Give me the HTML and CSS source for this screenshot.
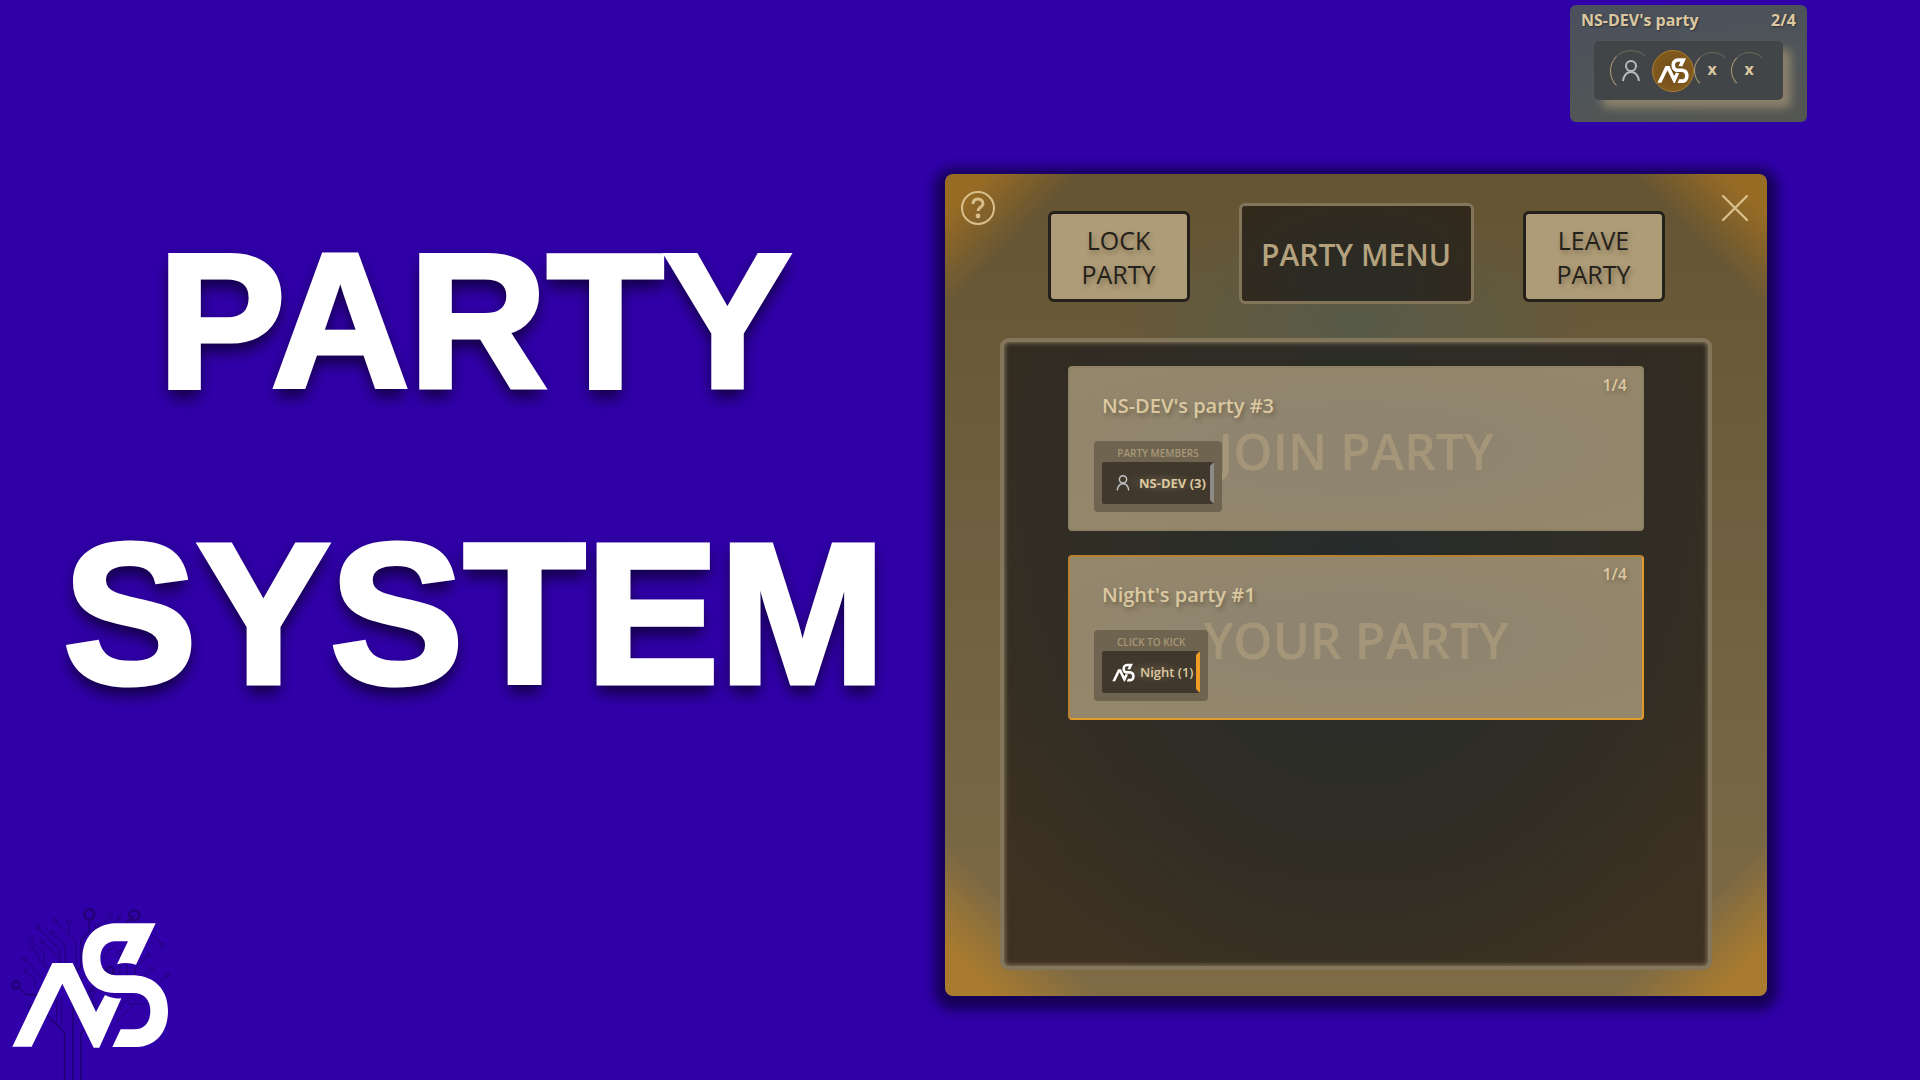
FILE: index.html
```
<!DOCTYPE html>
<html lang="en">
<head>
<meta charset="utf-8">
<title>Party System</title>
<link rel="stylesheet" href="styles.css">
</head>
<body>
<svg class="defs" aria-hidden="true">
  <symbol id="ns" viewBox="30 90 480 390">
    <path d="M37 470 L157 219 H218 L288 366 L315 315 Q338 327 364 325 L298 473 H281 L187 281 L95 470 Z"/>
    <path d="M467 100 L408 224 Q380 214 351 223 L384 154 H343 C315 156 301 178 301 205 C301 235 318 255 345 256 H405 C465 260 504 300 504 362 C504 425 470 468 412 471 H337 L362 418 H402 C435 418 451 395 451 362 C451 330 432 309 400 309 H345 C285 309 247 265 247 205 C247 145 285 102 345 100 Z"/>
  </symbol>
  <symbol id="person" viewBox="0 0 18 22">
    <circle cx="9" cy="6" r="5"/>
    <path d="M1 21 C2 15 5 12 9 12 C13 12 16 15 17 21"/>
  </symbol>
</svg>
<main class="stage">
  <section class="hero">
    <h1 class="title"><span class="title-top">PARTY</span><span class="title-bottom">SYSTEM</span></h1>
    <svg class="brand" viewBox="0 0 600 570" role="img" aria-label="NS">
      <g class="circuit">
        <path d="M194 570 V428 L142 376 M219 570 V350 M243 570 V430 L262 412 M268 90 V124 L243 150 V230 L230 243 M403 76 L380 96 M330 242 L262 310 M60 297 L78 314 H120" stroke-width="5"/>
        <path d="M165 93 L228 156 V240 M207 95 V133 M113 112 L179 178 V222 M155 128 L196 168 V222 M127 155 L179 206 M92 148 L133 190 V222 M95 173 L116 196 V210 L142 236 M72 206 L128 262 M77 242 L106 270 V290 L122 305 M332 77 L312 100 M358 82 L340 100 M489 165 L440 118 M446 195 L405 236 V258 M455 236 L430 260 M503 254 L468 288 M360 188 V255 M381 222 V255 M384 342 H450 M392 320 L330 380 M432 312 L350 395 M345 166 L243 268 M277 308 V340 L300 362 M170 330 V390 M185 320 V410 M219 405 L290 335 M150 395 H170 M87 350 L100 362 M292 108 L275 125 M242 262 V310" stroke-width="3"/>
        <g stroke-width="8"><circle cx="268" cy="73" r="15"/><circle cx="403" cy="76" r="15"/><circle cx="48" cy="285" r="11"/><circle cx="330" cy="242" r="11"/></g>
        <g class="nodes" stroke-width="3"><circle cx="165" cy="93" r="6"/><circle cx="207" cy="95" r="6"/><circle cx="113" cy="112" r="6"/><circle cx="155" cy="128" r="6"/><circle cx="127" cy="155" r="6"/><circle cx="92" cy="148" r="6"/><circle cx="95" cy="173" r="6"/><circle cx="72" cy="206" r="6"/><circle cx="77" cy="242" r="6"/><circle cx="332" cy="77" r="6"/><circle cx="358" cy="82" r="6"/><circle cx="489" cy="165" r="6"/><circle cx="446" cy="195" r="6"/><circle cx="455" cy="236" r="6"/><circle cx="503" cy="254" r="6"/><circle cx="360" cy="188" r="6"/><circle cx="277" cy="308" r="6"/><circle cx="292" cy="108" r="6"/><circle cx="170" cy="330" r="6"/><circle cx="87" cy="350" r="6"/></g>
      </g>
      <use href="#ns" x="30" y="90" width="480" height="390" fill="#fff"/>
    </svg>
  </section>

  <aside class="status">
    <header class="status-head"><span>NS-DEV's party</span><span>2/4</span></header>
    <div class="slots">
      <div class="slot"><svg class="slot-person"><use href="#person"/></svg></div>
      <div class="slot slot-me"><svg class="slot-logo"><use href="#ns"/></svg></div>
      <div class="slot slot-empty">x</div>
      <div class="slot slot-empty">x</div>
    </div>
  </aside>

  <section class="menu">
    <button class="icon-button help" aria-label="Help"><svg viewBox="0 0 34 34"><circle cx="17" cy="17" r="16"/><path d="M12 13 C12 9 14 8 17 8 C20 8 22 10 22 13 C22 16 17 16 17 20" stroke-width="3"/><circle class="dot" cx="17" cy="25" r="2.4"/></svg></button>
    <button class="icon-button close" aria-label="Close"><svg viewBox="0 0 34 34"><path d="M5 5 L29 29 M29 5 L5 29" stroke-linecap="round" stroke-width="2.4"/></svg></button>
    <header class="menu-head">
      <button class="action">LOCK PARTY</button>
      <h2 class="menu-title">PARTY MENU</h2>
      <button class="action">LEAVE PARTY</button>
    </header>
    <div class="list">
      <article class="card">
        <button class="card-join">JOIN PARTY</button>
        <h3 class="card-name">NS-DEV's party #3</h3>
        <span class="card-count">1/4</span>
        <div class="members">
          <span class="members-label">PARTY MEMBERS</span>
          <button class="member"><svg class="member-person"><use href="#person"/></svg><span>NS-DEV (3)</span></button>
        </div>
      </article>
      <article class="card card-own">
        <button class="card-join">YOUR PARTY</button>
        <h3 class="card-name">Night's party #1</h3>
        <span class="card-count">1/4</span>
        <div class="members">
          <span class="members-label">CLICK TO KICK</span>
          <button class="member member-own"><svg class="member-logo"><use href="#ns"/></svg><span>Night (1)</span></button>
        </div>
      </article>
    </div>
  </section>
</main>
</body>
</html>
```
FILE: styles.css
```
* { box-sizing: border-box; }
body {
  margin: 0;
  background: #3000a8;
  color: #dcc8a0;
  font-family: "Open Sans", "Noto Sans", sans-serif;
  font-weight: 600;
}
h1, h2, h3 { margin: 0; font-weight: inherit; }
button { margin: 0; padding: 0; border: 0; background: none; color: inherit; font: inherit; cursor: pointer; }
svg { display: block; }
.defs { display: none; }

.stage {
  display: grid;
  grid-template-columns: 945fr 822fr 153fr;
  grid-template-rows: 174px auto 1fr;
  min-height: 100vh;
}

/* Left side: headline and brand mark */
.hero {
  grid-column: 1;
  grid-row: 1 / -1;
  display: flex;
  flex-direction: column;
  padding-top: 176px;
}
.title {
  padding-left: 4px;
  color: #fff;
  font-family: "Liberation Sans", sans-serif;
  font-weight: 700;
  text-align: center;
  -webkit-text-stroke: 5px #fff;
  text-shadow: 0 12px 14px rgba(0, 0, 0, .4), 0 4px 16px rgba(0, 0, 0, .4);
}
.title span { display: block; }
.title-top { font-size: 191px; line-height: 290px; }
.title-bottom { font-size: 200px; line-height: 296px; }
.brand { width: 200px; height: 190px; margin-top: auto; }
.circuit { fill: none; stroke: #21007a; }
.nodes { fill: #3000a8; }

/* Party status widget */
.status {
  grid-column: 2 / 4;
  grid-row: 1;
  justify-self: end;
  width: 237px;
  height: 117px;
  margin: 5px 113px 0 0;
  padding: 0 11px;
  border-radius: 6px;
  background: linear-gradient(170deg, #4a505c, #505558 60%, #545651);
}
.status-head {
  display: flex;
  justify-content: space-between;
  height: 36px;
  font-size: 16px;
  line-height: 30px;
  font-weight: 700;
  text-shadow: 1px 1px 2px rgba(0, 0, 0, .4);
}
.slots {
  display: flex;
  justify-content: center;
  align-items: center;
  height: 59px;
  margin: 0 13px;
  border-radius: 5px;
  background: #424548;
  box-shadow: 8px 8px 10px #8c826c;
}
.slot {
  display: flex;
  justify-content: center;
  align-items: center;
  width: 42px;
  height: 42px;
  border: 1px solid transparent;
  border-top-color: #6f6858;
  border-left-color: #b09c78;
  border-radius: 50%;
}
.slot-me { border-color: #a87c30; background: radial-gradient(#6d4b18, #8a6020); }
.slot-empty { width: 37px; height: 37px; font-size: 16px; line-height: 16px; font-weight: 700; padding-bottom: 3px; }
.slot-person { width: 18px; height: 22px; fill: none; stroke: #b8babd; stroke-width: 2; }
.slot-logo { width: 32px; height: 27px; fill: #fff; }

/* Party menu window */
.menu {
  position: relative;
  grid-column: 2;
  grid-row: 2;
  padding: 29px 55px 26px;
  border-radius: 8px;
  background:
    linear-gradient(135deg, #976b24 30px, rgba(151, 107, 36, 0) 95px),
    linear-gradient(225deg, #976b24 30px, rgba(151, 107, 36, 0) 95px),
    linear-gradient(45deg, #a97b2e 35px, rgba(169, 123, 46, 0) 110px),
    linear-gradient(315deg, #a97b2e 35px, rgba(169, 123, 46, 0) 110px),
    radial-gradient(ellipse 240px 120px at 50% 18%, #575b49 0, rgba(87, 91, 73, 0) 100%),
    linear-gradient(#655432, #6e6040 45%, #7e6b46);
  box-shadow: 0 4px 12px 10px rgba(12, 0, 60, .75);
}
.icon-button {
  position: absolute;
  top: 17px;
  width: 34px;
  height: 34px;
}
.icon-button svg { width: 34px; height: 34px; fill: none; stroke: #d9bf8c; stroke-width: 2; }
.icon-button .dot { fill: #d9bf8c; stroke: none; }
.help { left: 16px; }
.close { right: 15px; }
.menu-head { display: flex; justify-content: center; align-items: center; gap: 49px; }
.action {
  width: 142px;
  height: 91px;
  margin-top: 6px;
  padding: 0 12px;
  border: 3px solid #24201a;
  border-radius: 6px;
  background: #ae9c78;
  color: #24201a;
  font-size: 25px;
  line-height: 34px;
  font-weight: 500;
  text-shadow: 2px 3px 5px rgba(60, 45, 20, .4);
}
.menu-title {
  width: 235px;
  height: 101px;
  border: 3px solid #82755a;
  border-radius: 6px;
  background: radial-gradient(ellipse at 50% 80%, #2c2b23 30%, #33291c);
  color: #b4a27e;
  font-size: 30px;
  line-height: 97px;
  text-align: center;
}
.list {
  display: flex;
  flex-direction: column;
  gap: 24px;
  min-height: 632px;
  margin-top: 34px;
  padding: 24px 64px;
  border: 4px solid #83765a;
  border-radius: 9px;
  background:
    radial-gradient(ellipse at 50% 36%, #262c2c 0, #2f2d25 240px, rgba(51, 45, 35, 0) 420px),
    linear-gradient(#332b21, #3e3222);
  box-shadow: inset 0 0 4px 1px #83765a;
}
.card {
  display: grid;
  grid-template-columns: 1fr auto;
  grid-template-rows: 73px 1fr;
  height: 165px;
  border: 2px solid #8d8064;
  border-radius: 4px;
  background: radial-gradient(ellipse, #8e8470 20%, #95876a);
}
.card-own {
  border: 2px solid #e29a2b;
  border-top-color: #b98231;
  border-left-color: #b98231;
}
.card-join {
  grid-area: 1 / 1 / 3 / 3;
  padding-top: 4px;
  color: #a5967a;
  font-size: 50px;
  line-height: 60px;
}
.card-name {
  grid-area: 1 / 1;
  align-self: center;
  padding: 2px 0 0 32px;
  font-size: 20px;
  line-height: 26px;
  text-shadow: 2px 3px 4px rgba(50, 40, 20, .35);
}
.card-count {
  grid-area: 1 / 2;
  padding: 5px 15px 0 0;
  font-size: 16px;
  line-height: 24px;
  text-shadow: 1px 2px 4px rgba(50, 40, 20, .35);
}
.card-name, .card-count { pointer-events: none; }
.members {
  grid-area: 2 / 1;
  justify-self: start;
  align-self: start;
  margin-left: 24px;
  height: 71px;
  padding: 5px 8px 8px;
  border-radius: 4px;
  background: #6f644f;
}
.members-label { display: block; height: 16px; color: #a79877; font-size: 10px; line-height: 14px; text-align: center; }
.member {
  display: flex;
  align-items: center;
  gap: 9px;
  height: 42px;
  padding: 0 4px 0 14px;
  border: 4px solid #40382c;
  border-right-color: #8e8a88;
  border-width: 4px 4px 4px 0;
  border-radius: 2px;
  background: radial-gradient(ellipse at 55% 50%, #5a4f3f, #40382c 45%);
  font-size: 13px;
  line-height: 20px;
  font-weight: 700;
  white-space: nowrap;
}
.member-own { padding: 0 3px 0 10px; gap: 5px; border-right-color: #ef9c26; font-weight: 600; }
.member-person { width: 14px; height: 16px; fill: none; stroke: #c2c4c8; stroke-width: 2; }
.member-logo { width: 23px; height: 19px; fill: #fff; }
```
